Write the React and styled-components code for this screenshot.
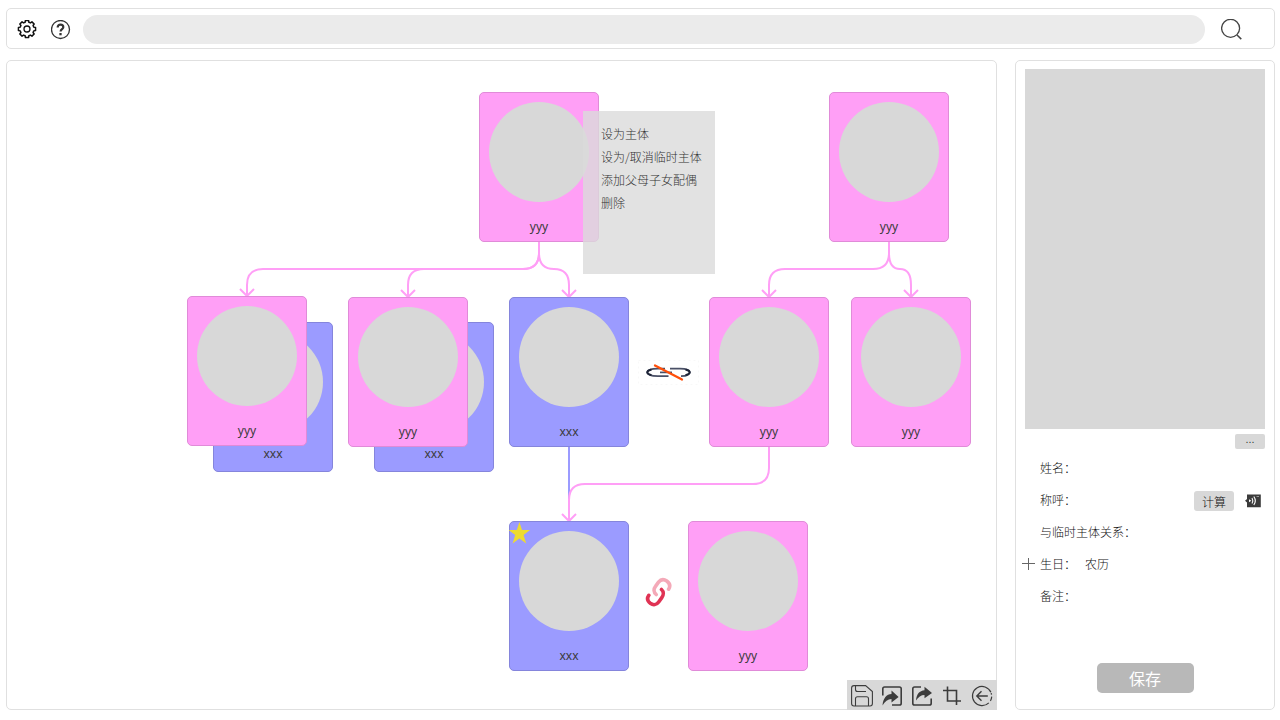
import React from "react";
import styled, { createGlobalStyle } from "styled-components";

const GlobalStyle = createGlobalStyle`
  *, *::before, *::after { box-sizing: border-box; }
  body {
    margin: 0;
    background: #fff;
    color: #111;
    font-family: "Noto Sans CJK SC", "Noto Sans", sans-serif;
    font-size: 12px;
    font-weight: 300;
    line-height: 16px;
  }
  button, input { font: inherit; color: inherit; }
`;

const PINK = "#ff9ff6";
const BLUE = "#9b9bff";

const Page = styled.div`
  display: flex;
  flex-direction: column;
  gap: 11px;
  min-height: 100vh;
  padding: 8px 5px 10px 6px;
`;

const Header = styled.header`
  display: flex;
  align-items: center;
  height: 41px;
  padding: 2px 30px 0 10px;
  border: 1px solid #e0e0e0;
  border-radius: 5px;
`;

const IconButton = styled.button`
  display: flex;
  align-items: center;
  justify-content: center;
  flex: none;
  width: ${(p) => p.$width || 30}px;
  height: 30px;
  padding: 0;
  border: 0;
  background: none;
  cursor: pointer;
`;

const HeaderTools = styled.div`
  display: flex;
  gap: 13px;
  margin-right: 11px;
`;

const SearchInput = styled.input`
  flex: 1;
  min-width: 0;
  height: 29px;
  margin-right: 15px;
  padding: 0 16px;
  border: 0;
  border-radius: 15px;
  background: #ebebeb;
  outline: none;
`;

const Main = styled.main`
  display: flex;
  flex: 1;
  gap: 18px;
`;

const Canvas = styled.section`
  position: relative;
  flex: 1;
  min-width: 0;
  min-height: 650px;
  border: 1px solid #e0e0e0;
  border-radius: 5px;
`;

const Connectors = styled.svg`
  position: absolute;
  top: 0;
  left: 0;
  width: 100%;
  height: 100%;
  fill: none;
  stroke: ${PINK};
  stroke-width: 2;
  pointer-events: none;
`;

const Placed = styled.div`
  position: absolute;
  left: ${(p) => p.$x}px;
  top: ${(p) => p.$y}px;
  display: flex;
`;

const Card = styled.article`
  display: flex;
  flex-direction: column;
  align-items: center;
  gap: ${(p) => (p.$behind ? 14 : 17)}px;
  width: 120px;
  height: 150px;
  padding-top: 9px;
  border: 1px solid ${(p) => (p.$blue ? "#8585dc" : "#e08bd8")};
  border-radius: 5px;
  background: ${(p) => (p.$blue ? BLUE : PINK)};
  color: #3a3a3a;
  font-family: "Noto Sans", "Noto Sans CJK SC", sans-serif;
  font-weight: 400;
`;

const Avatar = styled.div`
  flex: none;
  width: 100px;
  height: 100px;
  border-radius: 50%;
  background: #d8d8d8;
`;

const ContextMenu = styled.menu`
  position: absolute;
  left: 576px;
  top: 50px;
  width: 132px;
  height: 163px;
  margin: 0;
  padding: 11px 0 0 18px;
  list-style: none;
  background: rgba(219, 219, 219, 0.8);
`;

const MenuButton = styled.button`
  display: block;
  height: 23px;
  padding: 0;
  border: 0;
  background: none;
  color: #333;
  white-space: nowrap;
  cursor: pointer;
`;

const Toolbar = styled.div`
  position: absolute;
  right: -1px;
  bottom: -1px;
  display: flex;
  background: #d8d8d8;
`;

const Panel = styled.aside`
  display: flex;
  flex-direction: column;
  width: 260px;
  flex: none;
  padding-top: 8px;
  border: 1px solid #e0e0e0;
  border-radius: 5px;
`;

const Photo = styled.div`
  height: 360px;
  margin: 0 9px;
  background: #d8d8d8;
`;

const SmallButton = styled.button`
  width: 40px;
  height: 20px;
  padding: 2px 0 0;
  border: 0;
  border-radius: 3px;
  background: #d8d8d8;
  cursor: pointer;
`;

const MoreButton = styled(SmallButton)`
  width: 30px;
  height: 15px;
  padding: 0 0 8px;
  border-radius: 2px;
  line-height: 7px;
`;

const PhotoActions = styled.div`
  display: flex;
  justify-content: flex-end;
  margin: 5px 9px 4px;
`;

const Form = styled.form`
  display: flex;
  flex: 1;
  flex-direction: column;
`;

const Row = styled.div`
  display: grid;
  grid-template-columns: 18px auto 1fr auto;
  align-items: center;
  height: 32px;
  padding: 0 13px 0 6px;
`;

const Label = styled.label`
  grid-column: 2;
  padding-bottom: 2px;
`;

const Field = styled.input`
  grid-column: 3;
  width: 100%;
  min-width: 0;
  padding: 0 0 2px 9px;
  border: 0;
  background: none;
  outline: none;
`;

const RowActions = styled.div`
  display: flex;
  align-items: center;
  gap: 11px;
`;

const SaveButton = styled.button`
  align-self: center;
  width: 97px;
  height: 30px;
  margin-top: auto;
  margin-bottom: 16px;
  padding: 0;
  border: 0;
  border-radius: 5px;
  background: #b8b8b8;
  color: #fff;
  font-size: 16px;
  font-weight: 400;
  line-height: 30px;
  cursor: pointer;
`;

const people = [
  { x: 472, y: 31, name: "yyy" },
  { x: 822, y: 31, name: "yyy" },
  { x: 206, y: 261, name: "xxx", blue: true, behind: true },
  { x: 180, y: 235, name: "yyy" },
  { x: 367, y: 261, name: "xxx", blue: true, behind: true },
  { x: 341, y: 236, name: "yyy" },
  { x: 502, y: 236, name: "xxx", blue: true },
  { x: 702, y: 236, name: "yyy" },
  { x: 844, y: 236, name: "yyy" },
  { x: 502, y: 460, name: "xxx", blue: true },
  { x: 681, y: 460, name: "yyy" },
];

const arrows = [
  [240, 235],
  [401, 236],
  [562, 236],
  [762, 236],
  [904, 236],
  [562, 460],
];

const menuItems = ["设为主体", "设为/取消临时主体", "添加父母子女配偶", "删除"];

const gearPath = (() => {
  const points = [];
  for (let i = 0; i < 8; i++) {
    const base = (i * Math.PI) / 4;
    [[-0.27, 7], [-0.18, 8.7], [0.18, 8.7], [0.27, 7]].forEach(([a, r]) => {
      points.push(`${(10 + r * Math.sin(base + a)).toFixed(2)} ${(10 - r * Math.cos(base + a)).toFixed(2)}`);
    });
  }
  return `M${points.join("L")}Z`;
})();

const GearIcon = () => (
  <svg width="20" height="20" viewBox="0 0 20 20" fill="none" stroke="#111" strokeWidth="1.5" strokeLinejoin="round">
    <path d={gearPath} transform="translate(0 -1)" />
    <circle cx="10" cy="9" r="3" strokeWidth="1.3" />
  </svg>
);

const HelpIcon = () => (
  <svg width="20" height="20" viewBox="0 0 20 20" fill="none" stroke="#333">
    <circle cx="9.5" cy="9.5" r="9" strokeWidth="1.3" />
    <path d="M6.7 7.5V7.2C6.7 5.5 7.8 4.7 9.5 4.7s2.8 1 2.8 2.5c0 1.8-2.7 2-2.7 4.3" strokeWidth="2.2" />
    <path d="M9.5 13v2.3" strokeWidth="2.3" />
  </svg>
);

const SearchIcon = () => (
  <svg width="22" height="22" viewBox="0 0 22 22" fill="none" stroke="#444" strokeWidth="1.3">
    <circle cx="9.6" cy="9.3" r="9" />
    <path d="M16 16l4.3 4.1" strokeWidth="1.5" />
  </svg>
);

const tools = [
  {
    label: "保存",
    icon: (
      <g strokeWidth="1.1">
        <path d="M7 5.6H18.6L25.4 11.5V23.5Q25.4 26 23 26H7Q4.6 26 4.6 23.5V8Q4.6 5.6 7 5.6Z" />
        <path d="M8.5 6V9.5Q8.5 11.5 10.5 11.5H19" />
        <path d="M8.5 26V18.7Q8.5 16.7 10.5 16.7H19.5Q21.5 16.7 21.5 18.7V26" />
      </g>
    ),
  },
  {
    label: "导入",
    icon: (
      <g strokeWidth="1.6">
        <path d="M5.8 15.5V8.8Q5.8 7 7.6 7H22.4Q24.2 7 24.2 8.8V23.2Q24.2 25 22.4 25H15" />
        <path d="M5.5 25.5C6.2 18 9.5 14.3 14.5 14V10.6L21.6 17 14.5 22.5V19C10.8 19.2 8 21.2 5.5 25.5Z" fill="#3c3c3c" stroke="none" />
      </g>
    ),
  },
  {
    label: "导出",
    icon: (
      <g strokeWidth="1.6">
        <path d="M14 7H7.6Q5.8 7 5.8 8.8V23.2Q5.8 25 7.6 25H22.4Q24.2 25 24.2 23.2V18.5" />
        <path d="M9 20.5C9.5 14 12.5 10.8 17.5 10.3V6.8L25 13 17.5 18.3V15C14 15 11.3 17 9 20.5Z" fill="#3c3c3c" stroke="none" />
      </g>
    ),
  },
  {
    label: "裁剪",
    icon: <path d="M6 10.5H19.5V25M10.5 6.5V21H24" strokeWidth="1.6" />,
  },
  {
    label: "返回",
    icon: (
      <g strokeWidth="1.2">
        <path d="M23.9 12.3A9.6 9.6 0 1 0 21.8 22.9M23.4 20.9A9.6 9.6 0 0 0 24.7 16.6M24.5 14.6L24.2 13.2" />
        <path d="M20.8 16H9.8M14.5 11.3L9.8 16L14.5 20.7" strokeWidth="1.4" />
      </g>
    ),
  },
];

const BrokenLink = () => (
  <svg width="62" height="26" viewBox="0 0 62 26" fill="none">
    <rect x="0.5" y="0.5" width="60" height="24" stroke="#f8f8f8" strokeDasharray="2 3" />
    <g stroke="#4a5066" strokeWidth="1.7">
      <path d="M27 8.6H20C12 8.6 9.3 10.2 9.3 12.3S12 16.2 20 16.2H30.5" />
      <path d="M32 8.6H42C49 8.6 51.7 10.2 51.7 12.3S49 16.2 43 16.2" />
      <path d="M22 12.4H34" />
    </g>
    <g stroke="#1e2438" strokeWidth="2">
      <path d="M13.5 9.5C7.8 11 7.8 13.7 13.5 15.2" />
      <path d="M47.5 9.5C53.2 11 53.2 13.7 47.5 15.2" />
    </g>
    <path d="M17 5.5L44 19.5" stroke="#ff4f0a" strokeWidth="2.3" strokeLinecap="round" />
  </svg>
);

const Link = () => (
  <svg width="28" height="32" viewBox="0 0 28 32" fill="none" strokeWidth="3.6" strokeLinecap="round">
    <path d="M11.2 17.5C8.6 15.3 8.4 12 10.5 9.3L13.5 5.2C15.8 2.3 19 2 21.8 4C24.9 6.3 25.4 9.4 23.6 12.2" stroke="#f4a9b8" />
    <path d="M16.5 12.5C18.8 14.6 18.8 17.9 16.8 20.6L13.7 25C11.5 28 8.2 28.4 5.3 26.3C2.4 24.1 2 21 3.8 18.3" stroke="#e03354" />
  </svg>
);

const Star = () => (
  <svg width="22" height="22" viewBox="0 0 22 22" fill="#eedb30">
    <path d="M11.4 0L14 8H22L15.6 13L18.2 21.4L11.4 16.4L4.6 21.4L7.2 13L0.6 8H8.8Z" />
  </svg>
);

const PlusIcon = () => (
  <svg width="14" height="14" viewBox="0 0 14 14" stroke="#666" strokeWidth="1">
    <path d="M0 5.5H13M6.5 0V12" />
  </svg>
);

const VoiceIcon = () => (
  <svg width="16" height="14" viewBox="0 0 16 14" fill="none">
    <path d="M2 0.5H15.8V13.2H2V8.5L0 6.7L2 5Z" fill="#3b3b3b" />
    <path d="M4 5.3V8.3L6.3 6.8Z" fill="#fff" />
    <path d="M7 4Q8.6 6.8 7 9.6M8.8 2.5Q11.8 6.8 8.8 11" stroke="#fff" strokeWidth="1.1" />
    <path d="M11.5 2.5H14" stroke="#999" strokeWidth="1" />
  </svg>
);

export default function App() {
  return (
    <>
      <GlobalStyle />
      <Page>
        <Header>
          <HeaderTools>
            <IconButton $width={20} aria-label="设置"><GearIcon /></IconButton>
            <IconButton $width={22} aria-label="帮助"><HelpIcon /></IconButton>
          </HeaderTools>
          <SearchInput type="search" aria-label="搜索" />
          <IconButton $width={24} aria-label="开始搜索"><SearchIcon /></IconButton>
        </Header>
        <Main>
          <Canvas>
            <Connectors>
              <path d="M532 181V192Q532 208 516 208H256Q240 208 240 224V235" />
              <path d="M532 181V192Q532 208 516 208H417Q401 208 401 224V236" />
              <path d="M532 181V192Q532 208 547 208Q562 208 562 224V236" />
              <path d="M882 181V192Q882 208 866 208H778Q762 208 762 224V236" />
              <path d="M882 181V192Q882 208 893 208Q904 208 904 224V236" />
              <path d="M562 386V444" stroke={BLUE} />
              <path d="M762 386V407Q762 423 746 423H578Q562 423 562 439V460" />
              {arrows.map(([x, y]) => (
                <path key={`${x}-${y}`} d={`M${x - 7} ${y - 7}L${x} ${y}L${x + 7} ${y - 7}`} />
              ))}
            </Connectors>
            {people.map((p) => (
              <Placed key={`${p.x}-${p.y}`} $x={p.x} $y={p.y}>
                <Card $blue={p.blue} $behind={p.behind}>
                  <Avatar />
                  {p.name}
                </Card>
              </Placed>
            ))}
            <Placed $x={501} $y={461}><Star /></Placed>
            <Placed $x={631} $y={299}><BrokenLink /></Placed>
            <Placed $x={638} $y={516}><Link /></Placed>
            <ContextMenu>
              {menuItems.map((item) => (
                <li key={item}><MenuButton>{item}</MenuButton></li>
              ))}
            </ContextMenu>
            <Toolbar>
              {tools.map((tool) => (
                <IconButton key={tool.label} aria-label={tool.label}>
                  <svg width="30" height="30" viewBox="0 0 30 30" fill="none" stroke="#3c3c3c">{tool.icon}</svg>
                </IconButton>
              ))}
            </Toolbar>
          </Canvas>
          <Panel>
            <Photo />
            <PhotoActions>
              <MoreButton type="button" aria-label="更多">...</MoreButton>
            </PhotoActions>
            <Form onSubmit={(e) => e.preventDefault()}>
              <Row>
                <Label htmlFor="name">姓名：</Label>
                <Field id="name" />
              </Row>
              <Row>
                <Label htmlFor="title">称呼：</Label>
                <Field id="title" />
                <RowActions>
                  <SmallButton type="button">计算</SmallButton>
                  <IconButton type="button" $width={16} aria-label="朗读"><VoiceIcon /></IconButton>
                </RowActions>
              </Row>
              <Row>
                <Label htmlFor="relation">与临时主体关系：</Label>
                <Field id="relation" />
              </Row>
              <Row>
                <IconButton type="button" $width={14} aria-label="添加"><PlusIcon /></IconButton>
                <Label htmlFor="birthday">生日：</Label>
                <Field id="birthday" defaultValue="农历" />
              </Row>
              <Row>
                <Label htmlFor="note">备注：</Label>
                <Field id="note" />
              </Row>
              <SaveButton type="submit">保存</SaveButton>
            </Form>
          </Panel>
        </Main>
      </Page>
    </>
  );
}
